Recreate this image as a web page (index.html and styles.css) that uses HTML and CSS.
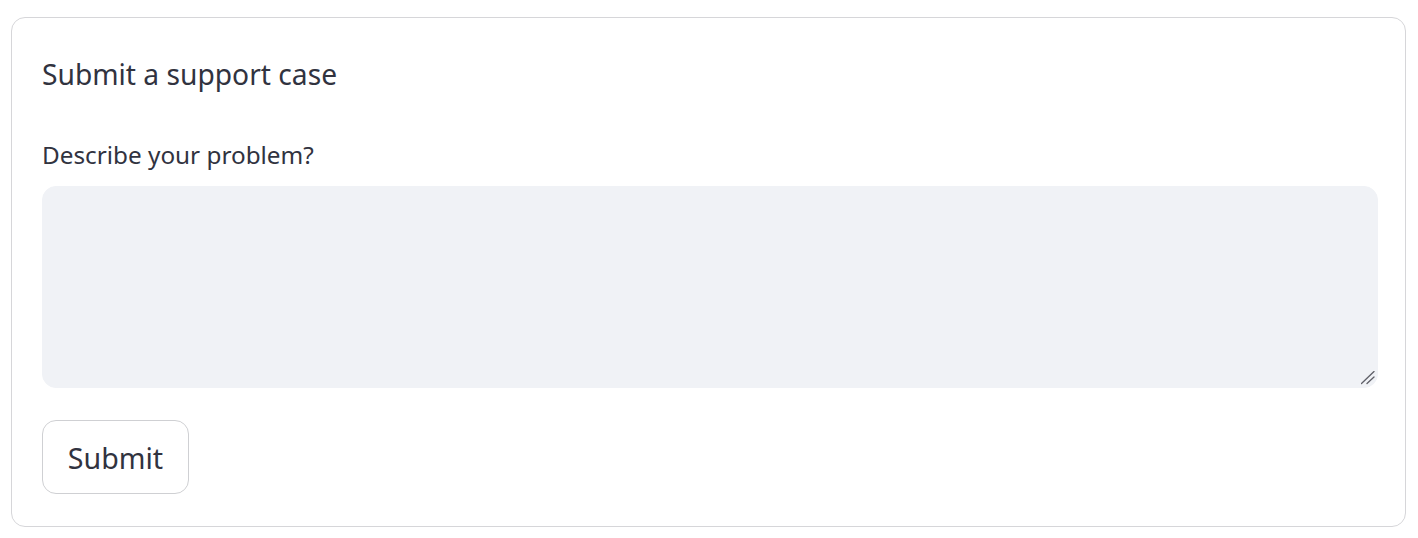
FILE: index.html
```html
<!DOCTYPE html>
<html lang="en">
<head>
  <meta charset="UTF-8">
  <meta name="viewport" content="width=device-width, initial-scale=1.0">
  <title>Support</title>
  <link rel="stylesheet" href="styles.css">
</head>
<body>
  <!-- Support case form -->
  <form class="case-form" onsubmit="return false">
    <p class="form-title">Submit a support case</p>
    <label class="field-label" for="problem">Describe your problem?</label>
    <div class="input-wrap">
      <textarea id="problem" class="field-input"></textarea>
      <svg class="grip" width="14" height="14" viewBox="0 0 14 14" aria-hidden="true">
        <path d="M0.5 12.5 L13 0.5 M6 12.5 L13 6" stroke="#5f6068" stroke-width="1.3" stroke-linecap="round" fill="none"/>
      </svg>
    </div>
    <button type="submit" class="submit-btn">Submit</button>
  </form>
</body>
</html>
```

FILE: styles.css
```css
body {
  margin: 0;
  padding: 17px 12px 0 11px;
  font-family: "Noto Sans", "Open Sans", sans-serif;
  color: #31333f;
  background: #fff;
}

.case-form {
  display: flex;
  flex-direction: column;
  align-items: flex-start;
  height: 510px;
  box-sizing: border-box;
  padding: 36px 27px 0 30px;
  border: 1px solid #d6d6d9;
  border-radius: 14px;
}

.form-title {
  margin: 0;
  font-size: 28.2px;
  line-height: 40px;
}

.field-label {
  margin-top: 46px;
  font-size: 24.3px;
  line-height: 30px;
}

.input-wrap {
  position: relative;
  width: 100%;
  margin-top: 16px;
}

.field-input {
  display: block;
  width: 100%;
  height: 202px;
  box-sizing: border-box;
  padding: 14px;
  background: #f0f2f6;
  border: 1px solid #f0f2f6;
  border-radius: 14px;
  font-family: inherit;
  font-size: 28px;
  color: inherit;
  resize: none;
  outline: none;
}

.grip {
  position: absolute;
  right: 3px;
  bottom: 3px;
  pointer-events: none;
}

.submit-btn {
  width: 147px;
  height: 74px;
  margin-top: 32px;
  padding: 0;
  background: #fff;
  border: 1px solid #cfd0d3;
  border-radius: 14px;
  font-family: inherit;
  font-size: 28.6px;
  color: inherit;
  cursor: pointer;
}
```
